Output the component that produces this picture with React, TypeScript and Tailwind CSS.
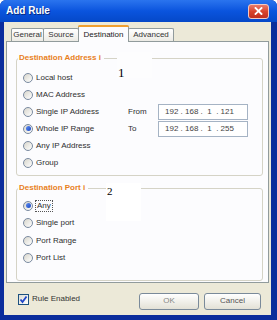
import React from "react";

function Radio({ checked }: { checked?: boolean }) {
  return (
    <span className="w-[10px] h-[10px] rounded-full border border-[#7a8aa0] bg-linear-to-br from-[#d8d6cc] to-white flex items-center justify-center shrink-0">
      {checked && <span className="w-[5px] h-[5px] rounded-full bg-linear-to-br from-[#5f8cf0] to-[#1b47c4]" />}
    </span>
  );
}

function RadioRow({ label, checked, focus, h = "h-[17px]" }: { label: string; checked?: boolean; focus?: boolean; h?: string }) {
  return (
    <div className={`${h} flex items-center pl-[6px] gap-[3px]`}>
      <Radio checked={checked} />
      <span className={focus ? "outline-1 outline-dotted outline-[#555] leading-[10px] px-[1px]" : "leading-[10px]"}>{label}</span>
    </div>
  );
}

function IpRow({ label, checked, side, ip }: { label: string; checked?: boolean; side: string; ip: string }) {
  return (
    <div className="h-[17px] flex items-center">
      <div className="w-[111px] flex items-center pl-[6px] gap-[3px]">
        <Radio checked={checked} />
        <span className="leading-[10px]">{label}</span>
      </div>
      <span className="w-[30px]">{side}</span>
      <div className="w-[90px] h-[16px] border border-[#a5b3c4] bg-white flex items-center pl-[6px] whitespace-pre text-[#444]">{ip}</div>
    </div>
  );
}

function Tab({ label, w, selected }: { label: string; w: string; selected?: boolean }) {
  if (selected) {
    return (
      <div className={`${w} h-[17px] -mb-px -ml-px relative z-10 bg-[#fcfcfe] border-l border-r border-[#919b9c] rounded-t-[3px] flex flex-col`}>
        <div className="h-[2px] bg-[#f0a030] rounded-t-[3px] -mx-px" />
        <div className="flex-1 flex items-center justify-center text-[#222]">{label}</div>
      </div>
    );
  }
  return (
    <div className={`${w} h-[13px] -ml-px border-t border-l border-r border-[#919b9c] rounded-t-[2px] bg-linear-to-b from-white to-[#ecebe5] flex items-center justify-center text-[#333]`}>
      {label}
    </div>
  );
}

export default function App() {
  return (
    <div className="w-[277px] h-[320px] bg-white font-['Liberation_Sans',Arial,sans-serif] text-[8px] text-[#2e2e2e]">
      <div className="w-[277px] h-[320px] bg-[#0b2d9c] rounded-t-[6px] flex flex-col overflow-hidden">
        {/* title bar */}
        <div className="h-[22px] shrink-0 bg-linear-to-b from-[#2a74ee] via-[#0a54de] to-[#0548c8] flex items-center justify-between pl-[6px] pr-[8px]">
          <span className="text-white font-bold text-[10px] leading-[12px] [text-shadow:1px_1px_0_#0a2a80]">Add Rule</span>
          <div className="w-[21px] h-[15px] rounded-[3px] border border-[#f4c8c0] bg-linear-to-b from-[#e87a6a] via-[#d9442c] to-[#c03020] flex items-center justify-center">
            <svg width="9" height="8" viewBox="0 0 9 8">
              <path d="M1.5 1 L7.5 7 M7.5 1 L1.5 7" stroke="white" strokeWidth="1.8" strokeLinecap="square" />
            </svg>
          </div>
        </div>
        {/* body */}
        <div className="flex-1 ml-[4px] mr-[6px] mb-[5px] bg-[#ece9d8] pt-[3px] px-[2px] flex flex-col">
          <div className="h-[16px] flex items-end pl-[6px]">
            <Tab label="General" w="w-[33px]" />
            <Tab label="Source" w="w-[36px]" />
            <Tab label="Destination" w="w-[51px]" selected />
            <Tab label="Advanced" w="w-[46px]" />
          </div>
          <div className="h-[242px] relative border border-[#919b9c] bg-[#fcfcfe] pl-[9px] pr-[5px] pt-[16px] flex flex-col">
            {/* group 1 */}
            <div className="h-[118px] relative border border-[#d5d3c6] rounded-[3px] pt-[10px]">
              <span className="absolute left-[1px] -top-[6px] px-[1px] pr-[3px] bg-[#fcfcfe] text-[#e8801c] font-bold leading-[10px]">Destination Address i</span>
              <RadioRow label="Local host" />
              <RadioRow label="MAC Address" />
              <IpRow label="Single IP Address" side="From" ip="192 . 168 .  1  . 121" />
              <IpRow label="Whole IP Range" side="To" ip="192 . 168 .  1  . 255" checked />
              <RadioRow label="Any IP Address" />
              <RadioRow label="Group" />
            </div>
            {/* group 2 */}
            <div className="h-[93px] mt-[12px] relative border border-[#d5d3c6] rounded-[3px] pt-[8px]">
              <span className="absolute left-[1px] -top-[6px] px-[1px] pr-[3px] bg-[#fcfcfe] text-[#e8801c] font-bold leading-[10px]">Destination Port i</span>
              <RadioRow label="Any" checked focus h="h-[17.5px]" />
              <RadioRow label="Single port" h="h-[17.5px]" />
              <RadioRow label="Port Range" h="h-[17.5px]" />
              <RadioRow label="Port List" h="h-[17.5px]" />
            </div>
            {/* annotation patches */}
            <div className="absolute left-[110px] top-[10px] w-[35px] h-[26px] bg-[#fdfdfe]">
              <span className="absolute left-[1px] top-[14px] font-['Liberation_Serif',serif] text-[13px] leading-[13px] text-black">1</span>
            </div>
            <div className="absolute left-[99px] top-[141px] w-[35px] h-[38px] bg-white">
              <span className="absolute left-[1px] top-[3px] font-['Liberation_Serif',serif] text-[11px] leading-[11px] text-black">2</span>
            </div>
          </div>
          {/* footer */}
          <div className="h-[32px] flex items-center pl-[12px] pr-[8px]">
            <div className="w-[11px] h-[11px] border border-[#1c5180] bg-linear-to-br from-[#dcdcd5] to-white flex items-center justify-center">
              <svg width="9" height="9" viewBox="0 0 9 9">
                <path d="M1.5 4.5 L3.5 7 L7.5 1.5" stroke="#2146c8" strokeWidth="1.8" fill="none" />
              </svg>
            </div>
            <span className="ml-[3px] text-[#333]">Rule Enabled</span>
            <div className="ml-auto flex gap-[5px] mt-[4px]">
              <div className="w-[60px] h-[17px] rounded-[3px] border border-[#7a8a9a] bg-linear-to-b from-white to-[#e3e1d6] flex items-center justify-center text-[#888]">OK</div>
              <div className="w-[57px] h-[17px] rounded-[3px] border border-[#7a8a9a] bg-linear-to-b from-white to-[#e3e1d6] flex items-center justify-center text-[#555]">Cancel</div>
            </div>
          </div>
        </div>
      </div>
    </div>
  );
}
